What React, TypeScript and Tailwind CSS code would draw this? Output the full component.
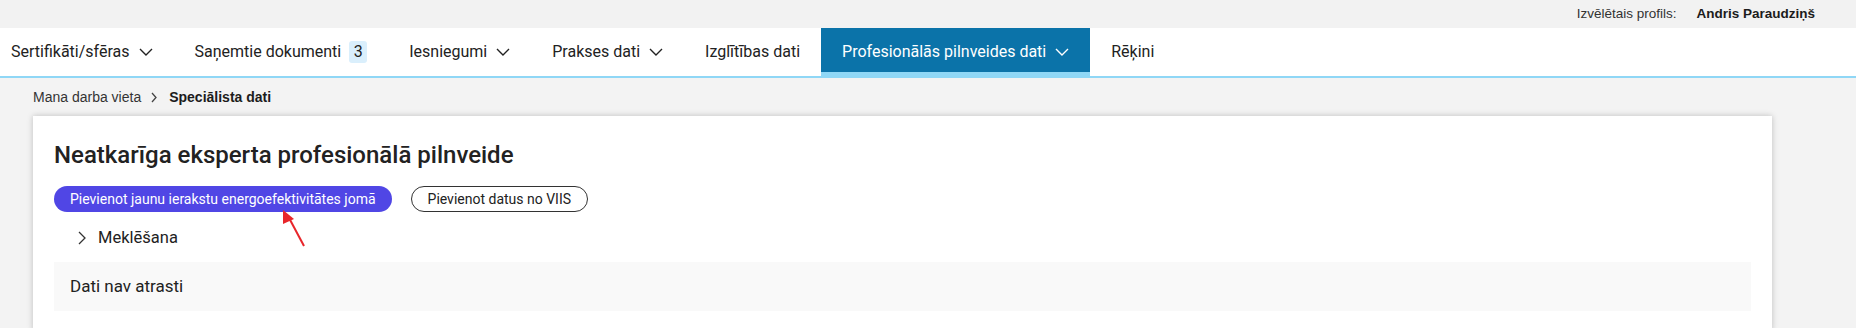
const Chevron = ({ className = "" }: { className?: string }) => (
  <svg width="14" height="8" viewBox="0 0 14 8" fill="none" className={className}>
    <polyline points="1,1 7,7 13,1" stroke="currentColor" strokeWidth="1.4" />
  </svg>
);

const RightChevron = ({ w = 7, h = 12 }: { w?: number; h?: number }) => (
  <svg width={w} height={h} viewBox={`0 0 ${w} ${h}`} fill="none">
    <polyline points={`1,1 ${w - 1},${h / 2} 1,${h - 1}`} stroke="currentColor" strokeWidth="1.3" />
  </svg>
);

const navItems = [
  { label: "Sertifikāti/sfēras", chevron: true },
  { label: "Saņemtie dokumenti", badge: "3" },
  { label: "Iesniegumi", chevron: true },
  { label: "Prakses dati", chevron: true },
  { label: "Izglītības dati" },
  { label: "Profesionālās pilnveides dati", chevron: true, active: true },
  { label: "Rēķini" },
];

export default function App() {
  return (
    <div className="min-h-[328px] bg-[#f3f3f3] font-['Roboto',sans-serif] text-[#222]">
      {/* profile bar */}
      <div className="flex h-[28px] items-center justify-end bg-[#f2f2f2] pr-[41px] font-['Liberation_Sans',Arial,sans-serif] text-[13.5px]">
        <span className="text-[#333]">Izvēlētais profils:</span>
        <span className="ml-[20px] font-bold text-[#1c1c1c]">Andris Paraudziņš</span>
      </div>

      {/* main nav */}
      <nav className="h-[50px] border-b-2 border-[#8fd7f6] bg-white">
        <ul className="-ml-[10px] flex h-[48px]">
          {navItems.map((item) => (
            <li
              key={item.label}
              className={
                item.active
                  ? "flex items-center gap-[9px] border-b-4 border-[#8fd7f6] bg-[#0b73a9] px-[21px] pt-[4px] text-[16px] text-white"
                  : "flex items-center gap-[9px] px-[21px] text-[16px] text-[#222]"
              }
            >
              <span>{item.label}</span>
              {item.badge && (
                <span className="-ml-[1px] flex h-[22px] w-[18px] items-center justify-center rounded-[3px] bg-[#daeffc] text-[16px]">
                  {item.badge}
                </span>
              )}
              {item.chevron && <Chevron />}
            </li>
          ))}
        </ul>
      </nav>

      {/* breadcrumb */}
      <div className="flex h-[38px] items-center pl-[33px] font-['Liberation_Sans',Arial,sans-serif] text-[14px]">
        <span className="text-[#333]">Mana darba vieta</span>
        <span className="mr-[12px] ml-[10px] text-[#444]">
          <RightChevron w={6} h={11} />
        </span>
        <span className="font-bold text-[#1c1c1c]">Speciālista dati</span>
      </div>

      {/* card */}
      <div className="relative mr-[84px] ml-[33px] bg-white px-[21px] pt-[24px] pb-[20px] shadow-[0_0_6px_rgba(0,0,0,0.22)]">
        <h1 className="text-[24px] leading-[30px] font-medium text-[#222]">
          Neatkarīga eksperta profesionālā pilnveide
        </h1>

        <div className="mt-[16px] flex items-center gap-[19px]">
          <button className="h-[26px] rounded-full bg-[#5046e5] px-[16px] text-[14px] text-white">
            Pievienot jaunu ierakstu energoefektivitātes jomā
          </button>
          <button className="h-[26px] rounded-full border border-[#333] bg-white px-[16px] text-[14px] text-[#222]">
            Pievienot datus no VIIS
          </button>
        </div>

        <div className="mt-[14px] flex h-[24px] items-center gap-[12px] pl-[24px] text-[16.5px] text-[#222]">
          <span className="text-[#333]">
            <RightChevron w={8} h={14} />
          </span>
          <span>Meklēšana</span>
        </div>

        <div className="mt-[12px] flex h-[49px] items-center bg-[#f9f9f9] pl-[16px] text-[17px] text-[#222]">
          Dati nav atrasti
        </div>

        {/* red annotation arrow */}
        <svg
          className="pointer-events-none absolute top-[94px] left-[244px]"
          width="32"
          height="40"
          viewBox="0 0 32 40"
          fill="none"
        >
          <line x1="11" y1="6" x2="27" y2="36" stroke="#e8262b" strokeWidth="2" />
          <polygon points="6,0 17,9 6,14" fill="#e8262b" />
        </svg>
      </div>
    </div>
  );
}
